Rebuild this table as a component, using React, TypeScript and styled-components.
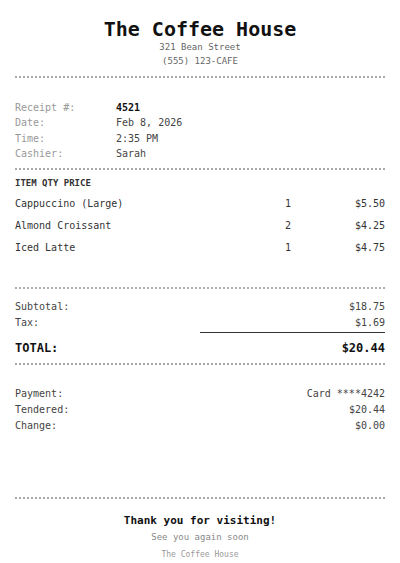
import * as React from 'react';
import styled, { createGlobalStyle } from 'styled-components';

const GlobalStyle = createGlobalStyle`
    html, body {
        margin: 0;
        padding: 0;
        background: #fff;
    }
    body {
        font-family: "DejaVu Sans Mono", "Liberation Mono", monospace;
        color: #333;
    }
`;

const Receipt = styled.div`
    width: 400px;
    box-sizing: border-box;
    padding: 18px 15px 0;
    display: flex;
    flex-direction: column;
`;

const Header = styled.div`
    text-align: center;
`;

const Title = styled.h1`
    margin: 0;
    font-size: 20px;
    line-height: 22px;
    font-weight: 700;
    color: #111;
`;

const SubLine = styled.div`
    font-size: 9px;
    line-height: 14px;
    color: #666;
`;

const Divider = styled.div<{ $top: number; $bottom?: number }>`
    border-top: 2px dotted #aaa;
    margin-top: ${(p) => p.$top}px;
    margin-bottom: ${(p) => p.$bottom ?? 0}px;
`;

const InfoRow = styled.div`
    display: grid;
    grid-template-columns: 101px 1fr;
    font-size: 10px;
    line-height: 15.33px;
`;

const InfoLabel = styled.span`
    color: #999;
`;

const InfoValue = styled.span<{ $strong?: boolean }>`
    color: ${(p) => (p.$strong ? '#111' : '#444')};
    font-weight: ${(p) => (p.$strong ? 700 : 400)};
`;

const ColumnHead = styled.div`
    margin-top: 6px;
    font-size: 9px;
    line-height: 14px;
    font-weight: 700;
    color: #333;
`;

const Items = styled.div`
    margin-top: 3px;
`;

const ItemRow = styled.div`
    display: grid;
    grid-template-columns: 1fr 34px 80px;
    font-size: 10px;
    line-height: 22px;
    color: #333;
`;

const Qty = styled.span`
    text-align: center;
`;

const Amount = styled.span`
    text-align: right;
`;

const Totals = styled.div<{ $top: number }>`
    margin-top: ${(p) => p.$top}px;
`;

const LineRow = styled.div`
    display: flex;
    justify-content: space-between;
    font-size: 10px;
    line-height: 16px;
    color: #444;
`;

const Rule = styled.div`
    margin: 1px 0 0 50%;
    border-top: 1.5px solid #333;
`;

const TotalRow = styled.div`
    margin-top: 6px;
    display: flex;
    justify-content: space-between;
    font-size: 12px;
    line-height: 18px;
    font-weight: 700;
    color: #111;
`;

const Footer = styled.div`
    margin-top: 14px;
    text-align: center;
`;

const Thanks = styled.div`
    font-size: 11px;
    line-height: 16px;
    font-weight: 700;
    color: #111;
`;

const SeeYou = styled.div`
    margin-top: 1px;
    font-size: 9px;
    line-height: 14px;
    color: #888;
`;

const Small = styled.div`
    margin-top: 5px;
    font-size: 8px;
    line-height: 12px;
    color: #999;
`;

const info = [
    { label: 'Receipt #:', value: '4521', strong: true },
    { label: 'Date:', value: 'Feb 8, 2026' },
    { label: 'Time:', value: '2:35 PM' },
    { label: 'Cashier:', value: 'Sarah' },
];

const items = [
    { name: 'Cappuccino (Large)', qty: 1, price: '$5.50' },
    { name: 'Almond Croissant', qty: 2, price: '$4.25' },
    { name: 'Iced Latte', qty: 1, price: '$4.75' },
];

const App: React.FC = () => {
    return (
        <>
            <GlobalStyle />
            <Receipt>
                <Header>
                    <Title>The Coffee House</Title>
                    <SubLine>321 Bean Street</SubLine>
                    <SubLine>(555) 123-CAFE</SubLine>
                </Header>
                <Divider $top={8} $bottom={22} />
                {info.map((row) => (
                    <InfoRow key={row.label}>
                        <InfoLabel>{row.label}</InfoLabel>
                        <InfoValue $strong={row.strong}>{row.value}</InfoValue>
                    </InfoRow>
                ))}
                <Divider $top={7} />
                <ColumnHead>ITEM QTY PRICE</ColumnHead>
                <Items>
                    {items.map((item) => (
                        <ItemRow key={item.name}>
                            <span>{item.name}</span>
                            <Qty>{item.qty}</Qty>
                            <Amount>{item.price}</Amount>
                        </ItemRow>
                    ))}
                </Items>
                <Divider $top={28} />
                <Totals $top={10}>
                    <LineRow>
                        <span>Subtotal:</span>
                        <span>$18.75</span>
                    </LineRow>
                    <LineRow>
                        <span>Tax:</span>
                        <span>$1.69</span>
                    </LineRow>
                    <Rule />
                    <TotalRow>
                        <span>TOTAL:</span>
                        <span>$20.44</span>
                    </TotalRow>
                </Totals>
                <Divider $top={6} />
                <Totals $top={21}>
                    <LineRow>
                        <span>Payment:</span>
                        <span>Card ****4242</span>
                    </LineRow>
                    <LineRow>
                        <span>Tendered:</span>
                        <span>$20.44</span>
                    </LineRow>
                    <LineRow>
                        <span>Change:</span>
                        <span>$0.00</span>
                    </LineRow>
                </Totals>
                <Divider $top={63} />
                <Footer>
                    <Thanks>Thank you for visiting!</Thanks>
                    <SeeYou>See you again soon</SeeYou>
                    <Small>The Coffee House</Small>
                </Footer>
            </Receipt>
        </>
    );
};

export default App;
